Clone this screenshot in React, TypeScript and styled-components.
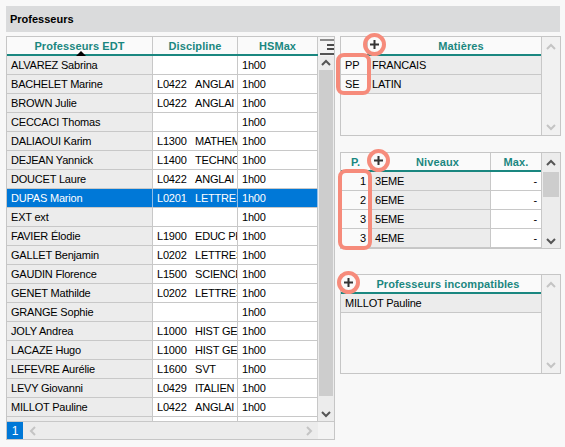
import React from "react"
import styled, { createGlobalStyle } from "styled-components"

const teal = "#1a8780"
const line = "#c8c8c8"
const coral = "#f68b7b"

const GlobalStyle = createGlobalStyle`
  html, body { margin: 0; padding: 0; background: #f8f8f8; }
  body {
    font-family: "Liberation Sans", Arial, sans-serif;
    font-size: 11px;
    color: #000;
  }
  #root { width: 565px; height: 447px; overflow: hidden; }
`

const Page = styled.div`
  padding: 6px 5px 0 6px;
`

const TitleBar = styled.div`
  height: 26px;
  background: #dadbdc;
  display: flex;
  align-items: center;
  padding-left: 4px;
  font-weight: bold;
`

const Content = styled.div`
  display: flex;
  gap: 5px;
  margin-top: 4px;
`

/* ---------- shared table parts ---------- */

const HeadRow = styled.div`
  display: flex;
  height: 19px;
  box-sizing: border-box;
  border-bottom: 2px solid ${teal};
  background: #fafafa;
`

const HeadCell = styled.div<{ $w?: number; $last?: boolean }>`
  position: relative;
  ${(p) => (p.$w ? `width: ${p.$w}px; flex: none;` : "flex: 1;")}
  box-sizing: border-box;
  border-right: ${(p) => (p.$last ? "none" : `1px solid ${line}`)};
  display: flex;
  align-items: center;
  justify-content: center;
  color: ${teal};
  font-weight: bold;
  letter-spacing: 0.1px;
  white-space: nowrap;
`

const SortMark = styled.span`
  position: absolute;
  left: 50%;
  bottom: -2px;
  margin-left: -4px;
  border-left: 5px solid transparent;
  border-right: 5px solid transparent;
  border-bottom: 5px solid #000;
`

const Row = styled.div<{ $selected?: boolean }>`
  display: flex;
  height: 19px;
  flex: none;
  box-sizing: border-box;
  border-bottom: 1px solid ${line};
  background: ${(p) => (p.$selected ? "#0078d7" : "transparent")};
  color: ${(p) => (p.$selected ? "#fff" : "#000")};
`

const Cell = styled.div<{
  $w?: number
  $tone?: "grey" | "white" | "clear"
  $align?: "left" | "right"
  $selected?: boolean
  $last?: boolean
}>`
  ${(p) => (p.$w ? `width: ${p.$w}px; flex: none;` : "flex: 1;")}
  box-sizing: border-box;
  padding: 0 ${(p) => (p.$align === "right" ? "4px" : "2px")} 0 4px;
  line-height: 18px;
  letter-spacing: -0.2px;
  white-space: nowrap;
  overflow: hidden;
  text-align: ${(p) => p.$align ?? "left"};
  border-right: ${(p) =>
    p.$last ? "none" : `1px solid ${p.$selected ? "#8fbde8" : line}`};
  background: ${(p) =>
    p.$selected
      ? "transparent"
      : p.$tone === "grey"
      ? "#ececec"
      : p.$tone === "white"
      ? "#fff"
      : "#fafafa"};
`

const Code = styled.span`
  display: inline-block;
  width: 38px;
`

/* ---------- scrollbars ---------- */

const ScrollCol = styled.div<{ $w: number; $active?: boolean }>`
  width: ${(p) => p.$w}px;
  flex: none;
  box-sizing: border-box;
  display: flex;
  flex-direction: column;
  background: ${(p) => (p.$active ? "#ececec" : "#f1f1f1")};
`

const ScrollBtn = styled.div<{ $h: number }>`
  height: ${(p) => p.$h}px;
  flex: none;
  display: flex;
  align-items: center;
  justify-content: center;
`

const Thumb = styled.div<{ $h: number }>`
  height: ${(p) => p.$h}px;
  flex: none;
  margin: 0 1px;
  background: #cdcdcd;
`

const Track = styled.div`
  flex: 1;
`

const Chevron = ({ dir, color }: { dir: "up" | "down" | "left" | "right"; color: string }) => {
  const pts = {
    up: "1,6 5,2 9,6",
    down: "1,2 5,6 9,2",
    left: "6,1 2,5 6,9",
    right: "2,1 6,5 2,9",
  }[dir]
  const horiz = dir === "left" || dir === "right"
  return (
    <svg width={horiz ? 8 : 10} height={horiz ? 10 : 8} viewBox={horiz ? "0 0 8 10" : "0 0 10 8"}>
      <polyline points={pts} fill="none" stroke={color} strokeWidth={2} />
    </svg>
  )
}

const MenuIcon = () => (
  <svg width="15" height="17" viewBox="0 0 15 17">
    <rect x="1" y="1" width="14" height="2" fill="#8a8a8a" />
    <rect x="8" y="6" width="7" height="2" fill="#4a4a4a" />
    <rect x="8" y="10" width="7" height="2" fill="#4a4a4a" />
    <rect x="1" y="15" width="14" height="2" fill="#555" />
  </svg>
)

/* ---------- left grid ---------- */

const Grid = styled.div`
  width: 329px;
  height: 404px;
  flex: none;
  border: 1px solid #c6c6c6;
  box-sizing: border-box;
  display: flex;
  background: #fff;
`

const GridData = styled.div`
  width: 311px;
  display: flex;
  flex-direction: column;
`

const GridBody = styled.div`
  height: 365px;
  overflow: hidden;
  display: flex;
  flex-direction: column;
`

const GridFooter = styled.div`
  height: 18px;
  box-sizing: border-box;
  border-top: 1px solid ${line};
  display: flex;
  background: #ececec;
`

const PageNum = styled.div`
  width: 16px;
  background: #0078d7;
  color: #fff;
  font-size: 12px;
  display: flex;
  align-items: center;
  justify-content: center;
`

const HScroll = styled.div`
  flex: 1;
  display: flex;
  align-items: center;
  justify-content: space-between;
  padding: 0 5px 0 6px;
`

const MenuCell = styled.div`
  height: 19px;
  flex: none;
  display: flex;
  align-items: flex-start;
  justify-content: center;
  padding-top: 1px;
  box-sizing: border-box;
  background: #f4f4f4;
`

const Corner = styled.div`
  height: 18px;
  flex: none;
  box-sizing: border-box;
  border-top: 1px solid ${line};
  background: #f3f3f3;
`

/* ---------- right boxes ---------- */

const Side = styled.div`
  width: 221px;
  display: flex;
  flex-direction: column;
`

const Box = styled.section<{ $h: number; $mt?: number }>`
  position: relative;
  height: ${(p) => p.$h}px;
  margin-top: ${(p) => p.$mt ?? 0}px;
  flex: none;
  border: 1px solid #c6c6c6;
  box-sizing: border-box;
  display: flex;
  background: #f7f7f7;
`

const BoxData = styled.div`
  width: 200px;
  display: flex;
  flex-direction: column;
  border-right: 1px solid ${line};
`

const PlusCell = styled.div<{ $w: number }>`
  width: ${(p) => p.$w}px;
  flex: none;
  display: flex;
  align-items: center;
  justify-content: center;
  padding-bottom: 3px;
  box-sizing: border-box;
`

const AddButton = styled.span`
  position: relative;
  display: inline-flex;
  width: 9px;
  height: 9px;
  &::after {
    content: "";
    position: absolute;
    left: 50%;
    top: 50%;
    width: 23px;
    height: 23px;
    margin: -11.5px 0 0 -11.5px;
    border: 4px solid ${coral};
    border-radius: 50%;
    box-sizing: border-box;
  }
`

const Marker = styled.div<{ $top: number; $left: number; $w: number; $h: number }>`
  position: absolute;
  top: ${(p) => p.$top}px;
  left: ${(p) => p.$left}px;
  width: ${(p) => p.$w}px;
  height: ${(p) => p.$h}px;
  border: 4px solid ${coral};
  border-radius: 8px;
  box-sizing: border-box;
  pointer-events: none;
`

const Plus = () => (
  <AddButton>
    <svg width="9" height="9" viewBox="0 0 9 9">
      <rect x="3.5" y="0" width="2" height="9" fill="#333" />
      <rect x="0" y="3.5" width="9" height="2" fill="#333" />
    </svg>
  </AddButton>
)

/* ---------- data ---------- */

type Prof = { name: string; code?: string; label?: string; hs?: string; selected?: boolean }

// discipline labels are cut by the column, as in the grid
const profs: Prof[] = [
  { name: "ALVAREZ Sabrina", hs: "1h00" },
  { name: "BACHELET Marine", code: "L0422", label: "ANGLAI", hs: "1h00" },
  { name: "BROWN Julie", code: "L0422", label: "ANGLAI", hs: "1h00" },
  { name: "CECCACI Thomas", hs: "1h00" },
  { name: "DALIAOUI Karim", code: "L1300", label: "MATHEM", hs: "1h00" },
  { name: "DEJEAN Yannick", code: "L1400", label: "TECHNO", hs: "1h00" },
  { name: "DOUCET Laure", code: "L0422", label: "ANGLAI", hs: "1h00" },
  { name: "DUPAS Marion", code: "L0201", label: "LETTRES", hs: "1h00", selected: true },
  { name: "EXT ext", hs: "1h00" },
  { name: "FAVIER Élodie", code: "L1900", label: "EDUC PH", hs: "1h00" },
  { name: "GALLET Benjamin", code: "L0202", label: "LETTRES", hs: "1h00" },
  { name: "GAUDIN Florence", code: "L1500", label: "SCIENCE", hs: "1h00" },
  { name: "GENET Mathilde", code: "L0202", label: "LETTRES", hs: "1h00" },
  { name: "GRANGE Sophie", hs: "1h00" },
  { name: "JOLY Andrea", code: "L1000", label: "HIST GE", hs: "1h00" },
  { name: "LACAZE Hugo", code: "L1000", label: "HIST GE", hs: "1h00" },
  { name: "LEFEVRE Aurélie", code: "L1600", label: "SVT", hs: "1h00" },
  { name: "LEVY Giovanni", code: "L0429", label: "ITALIEN", hs: "1h00" },
  { name: "MILLOT Pauline", code: "L0422", label: "ANGLAI", hs: "1h00" },
  { name: "" }, // next row, only its top edge shows
]

const matieres = [
  { code: "PP", label: "FRANCAIS" },
  { code: "SE", label: "LATIN" },
]

const niveaux = [
  { p: 1, label: "3EME" },
  { p: 2, label: "6EME" },
  { p: 3, label: "5EME" },
  { p: 3, label: "4EME" },
]

export default function App() {
  return (
    <>
      <GlobalStyle />
      <Page>
        <TitleBar>Professeurs</TitleBar>
        <Content>
          <Grid>
            <GridData>
              <HeadRow>
                <HeadCell $w={146}>
                  Professeurs EDT
                  <SortMark />
                </HeadCell>
                <HeadCell $w={85}>Discipline</HeadCell>
                <HeadCell $w={80}>HSMax</HeadCell>
              </HeadRow>
              <GridBody>
                {profs.map((p, i) => (
                  <Row key={i} $selected={p.selected}>
                    <Cell $w={146} $tone="grey" $selected={p.selected}>
                      {p.name}
                    </Cell>
                    <Cell $w={85} $tone="white" $selected={p.selected}>
                      {p.code && (
                        <>
                          <Code>{p.code}</Code>
                          {p.label}
                        </>
                      )}
                    </Cell>
                    <Cell $w={80} $tone="white" $selected={p.selected}>
                      {p.hs}
                    </Cell>
                  </Row>
                ))}
              </GridBody>
              <GridFooter>
                <PageNum>1</PageNum>
                <HScroll>
                  <Chevron dir="left" color="#c4c4c4" />
                  <Chevron dir="right" color="#c4c4c4" />
                </HScroll>
              </GridFooter>
            </GridData>
            <ScrollCol $w={16} $active>
              <MenuCell>
                <MenuIcon />
              </MenuCell>
              <ScrollBtn $h={14}>
                <Chevron dir="up" color="#555" />
              </ScrollBtn>
              <Thumb $h={326} />
              <Track />
              <ScrollBtn $h={14}>
                <Chevron dir="down" color="#555" />
              </ScrollBtn>
              <Corner />
            </ScrollCol>
          </Grid>

          <Side>
            <Box $h={100}>
              <BoxData>
                <HeadRow>
                  <HeadCell $w={27} />
                  <PlusCell $w={13}>
                    <Plus />
                  </PlusCell>
                  <HeadCell $last>Matières</HeadCell>
                </HeadRow>
                {matieres.map((m) => (
                  <Row key={m.code}>
                    <Cell $w={27}>{m.code}</Cell>
                    <Cell $tone="grey" $last>
                      {m.label}
                    </Cell>
                  </Row>
                ))}
              </BoxData>
              <ScrollCol $w={18}>
                <ScrollBtn $h={19}>
                  <Chevron dir="up" color="#c4c4c4" />
                </ScrollBtn>
                <Track />
                <ScrollBtn $h={16}>
                  <Chevron dir="down" color="#c4c4c4" />
                </ScrollBtn>
              </ScrollCol>
              <Marker $top={16} $left={-5} $w={35} $h={42} />
            </Box>

            <Box $h={97} $mt={16}>
              <BoxData>
                <HeadRow>
                  <HeadCell $w={30}>P.</HeadCell>
                  <PlusCell $w={14}>
                    <Plus />
                  </PlusCell>
                  <HeadCell $w={106}>Niveaux</HeadCell>
                  <HeadCell $last>Max.</HeadCell>
                </HeadRow>
                {niveaux.map((n) => (
                  <Row key={n.label}>
                    <Cell $w={30} $align="right">
                      {n.p}
                    </Cell>
                    <Cell $w={120} $tone="grey">
                      {n.label}
                    </Cell>
                    <Cell $tone="white" $align="right" $last>
                      -
                    </Cell>
                  </Row>
                ))}
              </BoxData>
              <ScrollCol $w={18} $active>
                <ScrollBtn $h={19}>
                  <Chevron dir="up" color="#555" />
                </ScrollBtn>
                <Thumb $h={25} />
                <Track />
                <ScrollBtn $h={14}>
                  <Chevron dir="down" color="#555" />
                </ScrollBtn>
              </ScrollCol>
              <Marker $top={16} $left={-3} $w={34} $h={81} />
            </Box>

            <Box $h={100} $mt={25}>
              <BoxData>
                <HeadRow>
                  <PlusCell $w={14}>
                    <Plus />
                  </PlusCell>
                  <HeadCell $last>Professeurs incompatibles</HeadCell>
                </HeadRow>
                <Row>
                  <Cell $tone="grey" $last>
                    MILLOT Pauline
                  </Cell>
                </Row>
              </BoxData>
              <ScrollCol $w={18}>
                <ScrollBtn $h={19}>
                  <Chevron dir="up" color="#c4c4c4" />
                </ScrollBtn>
                <Track />
                <ScrollBtn $h={16}>
                  <Chevron dir="down" color="#c4c4c4" />
                </ScrollBtn>
              </ScrollCol>
            </Box>
          </Side>
        </Content>
      </Page>
    </>
  )
}
